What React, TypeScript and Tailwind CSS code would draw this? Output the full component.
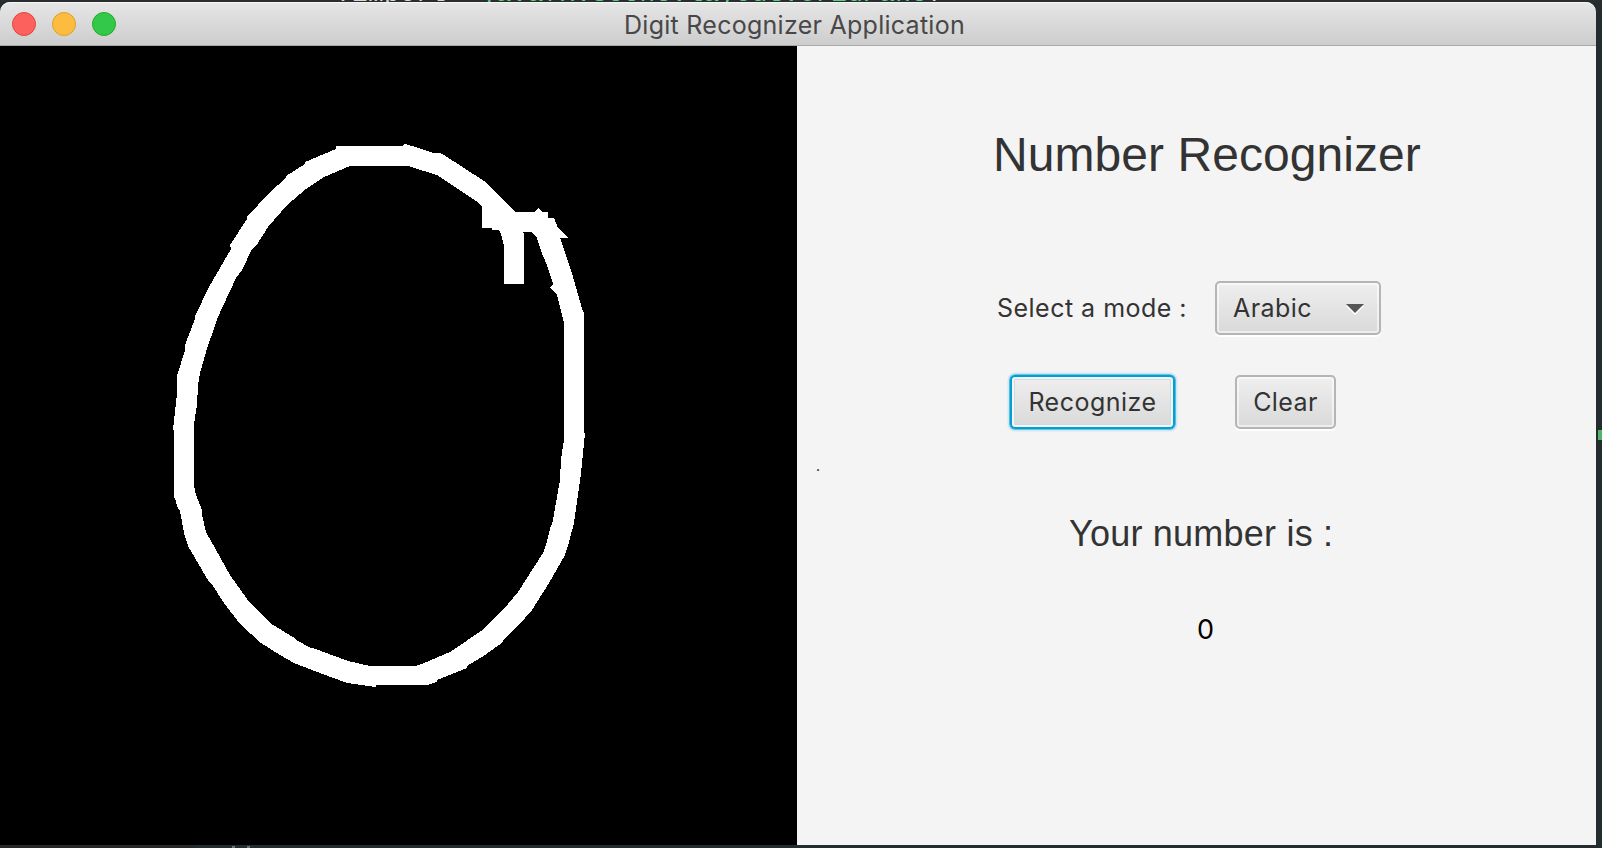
const OUTLINE =
  "M336 146H403L404 143.5L412 146L434 153L439 152.5L444 155L484 181L495 191L507 204L516 212H534L538 208L542 212H548V218H554L558 228L569 238H560L571 270L583 312H584V433H585L581 473L574 523L569 542L565 555L549 583L532 610L518 626L503 640V642L485 655L467 666V668L437 680V682L427 685H376V687L347 683L312 670L294 663L280 655L261 643L240 624L224 603L211 583L209 582L188 546L184 533L180 511L178 509L175 498H174V430H173L177 393V376L185 350V345L195 319V316L209 287L231 249L230 245L247 219V217L270 192L286 178V176L305 164V162L336 149Z";
const HOLE =
  "M350 166H408L437 175L476 201L482 207V228H492V230H499L501 234L504 246V284H524V234L522 232H532L537 238L541 251L547 265L553 284L550 288L557 295L564 323V440L561 459L560 480L552 525H551L546 545L543 553L518 592L508 604L484 629L450 652L422 664L415 666H370L348 661L313 648H311L296 640V639L270 623L250 603L230 575L206 532L202 515V510L196 495L194 485V424L197 405L198 385L200 373L208 345L213 332L217 319L236 278L242 270L252 249L256 246L268 227L287 205L306 189L324 177Z";

function TitleBar() {
  return (
    <header className="relative flex h-11 shrink-0 items-center rounded-t-[10px] border-b border-[#a8a8a8] bg-linear-to-b from-[#e6e6e6] to-[#cdcdcd] pt-px pl-3 shadow-[inset_0_1px_0_#f6f6f6]">
      <div className="flex gap-4">
        <span className="size-6 rounded-full border border-[#e2463f] bg-[#fc615d]" />
        <span className="size-6 rounded-full border border-[#dfa023] bg-[#fdbc40]" />
        <span className="size-6 rounded-full border border-[#1dad2b] bg-[#34c84a]" />
      </div>
      <h1 className="mt-px ml-[508px] whitespace-nowrap font-[Inter] text-[25px] leading-8 tracking-[0.27px] text-[#484848]">
        Digit Recognizer Application
      </h1>
    </header>
  );
}

function DrawingCanvas() {
  return (
    <svg className="h-[799px] w-[797px] shrink-0 bg-black" viewBox="0 46 797 799" shapeRendering="crispEdges">
      <path d={OUTLINE + HOLE} fill="#fff" fillRule="evenodd" />
    </svg>
  );
}

function ControlPanel() {
  return (
    <main className="flex h-[799px] w-[799px] flex-col bg-[#f4f4f4] text-[#333]">
      <h2 className="mt-[81px] ml-[196px] h-14 whitespace-nowrap font-['Liberation_Sans'] text-[48px] leading-14 tracking-[0.06px]">
        Number Recognizer
      </h2>
      <div className="mt-[98px] ml-[200px] flex h-[54px] items-center">
        <label className="w-[218px] pt-0.5 whitespace-nowrap font-[Inter] text-[25px] tracking-[0.48px]">Select a mode :</label>
        <button className="flex h-[54px] w-[166px] items-center justify-between rounded-[5px] border-2 border-[#b5b5b5] bg-linear-to-b from-[#efefef] to-[#d9d9d9] pr-[15px] pl-4 font-[Inter] text-[25px] tracking-[0.45px] shadow-[inset_0_0_0_2px_#ffffff88,0_2px_0_#fff]">
          <span className="pt-0.5">Arabic</span>
          <svg className="mt-px" width="18" height="12" viewBox="0 0 18 12">
            <path d="M0 3H18L9 12Z" fill="#fff" />
            <path d="M0 1H18L9 10Z" fill="#555" />
          </svg>
        </button>
      </div>
      <div className="mt-10 ml-[213px] flex h-[54px] gap-[60px]">
        <button className="h-[54px] w-[165px] rounded-[5px] border-2 border-[#039ed3] bg-linear-to-b from-[#efefef] to-[#d9d9d9] pt-0.5 font-[Inter] text-[25px] tracking-[0.5px] shadow-[0_0_0_0.6px_#039ed3,0_0_0_2.5px_#cfe8f1,inset_0_0_0_2px_#f5f5f5,inset_0_0_0_3px_#cbdde3]">
          Recognize
        </button>
        <button className="h-[54px] w-[101px] rounded-[5px] border-2 border-[#b5b5b5] bg-linear-to-b from-[#efefef] to-[#d9d9d9] pt-0.5 font-[Inter] text-[25px] tracking-[0.4px] shadow-[inset_0_0_0_2px_#ffffff88,0_2px_0_#fff]">
          Clear
        </button>
      </div>
      <span className="mt-[27px] ml-[19px] h-5 font-[Inter] text-[14px] leading-5 text-black">.</span>
      <h3 className="mt-[38px] ml-[272px] h-10 whitespace-nowrap font-['Liberation_Sans'] text-[36px] leading-10 tracking-[0.22px]">
        Your number is :
      </h3>
      <output className="mt-[58px] ml-[400px] h-9 font-[Inter] text-[27px] leading-9 text-black">0</output>
    </main>
  );
}

export default function App() {
  return (
    <div className="relative h-[848px] w-[1602px] overflow-hidden bg-[#242c2f] pt-0.5">
      <div className="absolute top-0 left-0 h-0.5 w-full overflow-hidden bg-[#2a2d2f]">
        <div className="-mt-[18px] ml-[320px] whitespace-pre font-['Liberation_Mono'] text-[26.1px] leading-6 tracking-[0.32px] text-[#d5dadb]">
          {"<?import  "}
          <span className="text-[#5fd080]">javafx.scene.layout.GridPane</span>
          {"?>"}
        </div>
      </div>
      <div className="relative flex w-[1596px] flex-col overflow-hidden">
        <TitleBar />
        <div className="flex">
          <DrawingCanvas />
          <ControlPanel />
        </div>
      </div>
      <div className="absolute top-[430px] right-0 h-[10px] w-1 bg-[#50b66c]" />
      <div className="absolute bottom-0 left-0 h-0.5 w-[194px] bg-[#292526]" />
      <div className="absolute bottom-0 left-[232px] flex gap-3">
        <span className="h-0.5 w-[3px] bg-[#6d7477]" />
        <span className="h-0.5 w-[3px] bg-[#6d7477]" />
      </div>
    </div>
  );
}
